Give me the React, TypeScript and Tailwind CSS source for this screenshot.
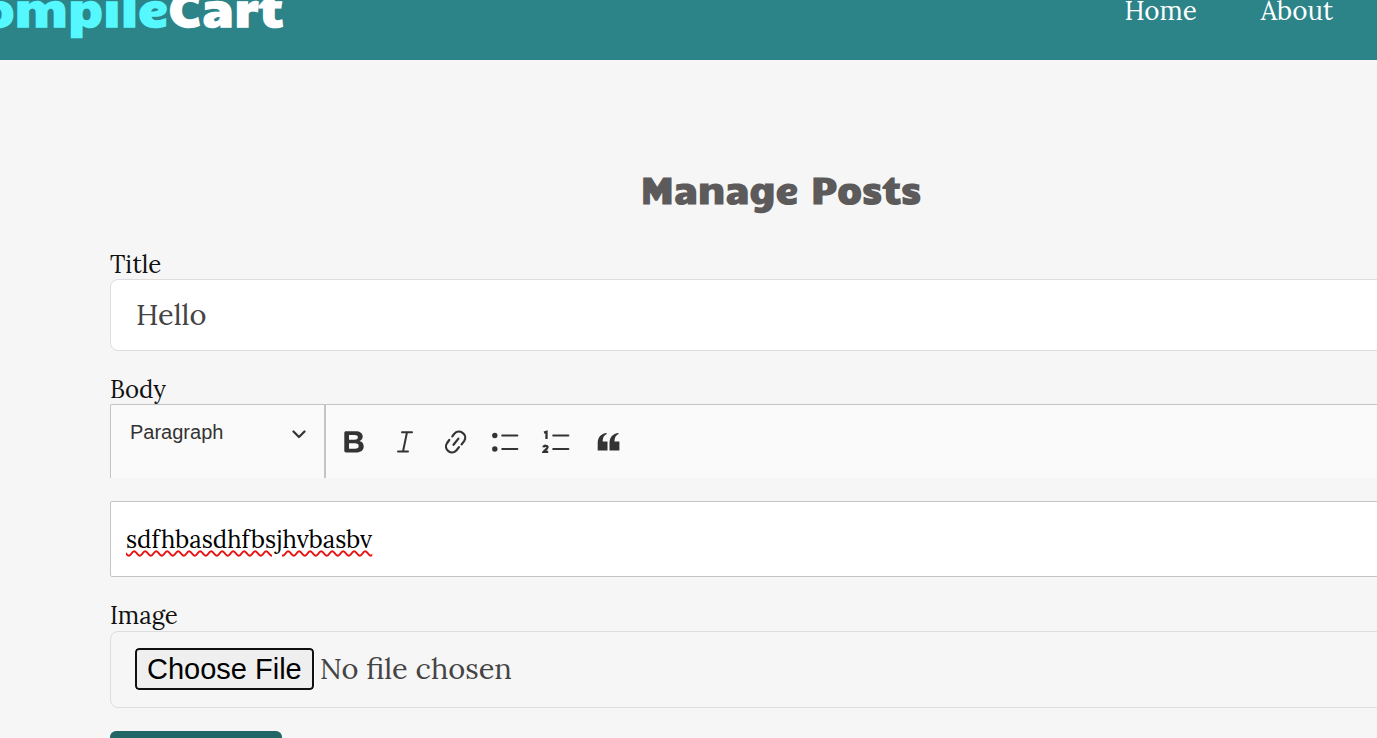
import React from "react";

const serif = "font-['Lora','Liberation_Serif',serif]";
const display = "font-['Candal','Noto_Sans',sans-serif] font-bold";

function ToolButton({ label, children }: { label: string; children: React.ReactNode }) {
  return (
    <button type="button" aria-label={label} className="flex h-10 w-[51px] items-center justify-center text-[#333333]">
      <svg viewBox="0 0 30 30" className="h-[30px] w-[30px]" fill="none" stroke="currentColor" strokeWidth="2.200" strokeLinecap="round" aria-hidden="true">
        {children}
      </svg>
    </button>
  );
}

function Header() {
  return (
    <header className="flex h-[60px] items-start justify-between overflow-hidden bg-[#2c8489] text-white">
      <a href="#home" className={`-ml-[52px] -mt-4 text-[48px] leading-[44px] ${display}`}>
        <span className="text-[#55f8ff]">Compile</span>Cart
      </a>
      <nav className={`flex gap-16 pr-11 text-[26px] leading-[22px] ${serif}`}>
        <a href="#home">Home</a>
        <a href="#about">About</a>
      </nav>
    </header>
  );
}

function Toolbar() {
  return (
    <div className="flex h-[74px] rounded-tl-[2px] border-l border-t border-[#c4c4c4] bg-[#fafafa]">
      <div className="relative w-[215px] border-r-2 border-[#c4c4c4]">
        <select aria-label="Heading" className="h-[54px] w-full appearance-none bg-transparent pl-[19px] font-['Liberation_Sans',sans-serif] text-[20px] text-[#333333]">
          <option>Paragraph</option>
          <option>Heading</option>
        </select>
        <svg viewBox="0 0 14 9" className="pointer-events-none absolute right-[18px] top-[25px] h-[9px] w-[14px]" fill="none" stroke="#333333" strokeWidth="2.2" strokeLinecap="round" strokeLinejoin="round" aria-hidden="true">
          <path d="M1.5 1.5 7 7l5.500-5.500" />
        </svg>
      </div>
      <div className="flex items-center pl-[1px]">
        <ToolButton label="Bold">
          <path fill="currentColor" stroke="none" fillRule="evenodd" d="M8 4.200h9.200c5 0 7.500 2 7.500 5.400 0 2.200-1.200 3.800-3.200 4.500 2.600.6 4.200 2.600 4.200 5.300 0 3.700-2.900 6-7.700 6H8c-1 0-1.700-.7-1.700-1.700V5.900c0-1 .7-1.700 1.700-1.700zM11 7.900v4.800h5.400c2.300 0 3.500-.8 3.500-2.500 0-1.600-1.100-2.300-3.400-2.300zM11 16.300v5.400h6c2.500 0 3.700-.9 3.700-2.700s-1.300-2.700-3.900-2.700z" />
        </ToolButton>
        <ToolButton label="Italic">
          <path d="M13 5.200h10M9 24.500h10M18 5.200l-4 19.300" strokeWidth="2" />
        </ToolButton>
        <ToolButton label="Link">
          <path d="m13.500 17.800 4.900-6.200M12.300 9.400l1.900-2.500c4.800-5.900 14.300.8 9.900 7.200l-2.500 3.300M9.300 13l-2.200 3c-4.300 6.300 4.600 12.900 9.400 7.300l2.500-3.200" />
        </ToolButton>
        <ToolButton label="Bulleted List">
          <circle cx="3.800" cy="8.500" r="2.700" fill="currentColor" stroke="none" />
          <circle cx="3.800" cy="22" r="2.700" fill="currentColor" stroke="none" />
          <path d="M11.300 8.500h15M11.300 22h15" />
        </ToolButton>
        <ToolButton label="Numbered List">
          <path d="M11.300 8.500h15M11.300 22h15" />
          <path d="M2 5.700 4.500 4.900v7M1.500 20.300c.3-2.100 4.300-2 4 .1-.2 1.500-2.500 2.800-3.900 4.500h4.600" strokeWidth="2.300" strokeLinecap="butt" />
        </ToolButton>
        <ToolButton label="Block quote">
          <path d="M4.700 23.500v-7.300c0-6 3.300-9.600 9-10.200v1.100c-2.800 1.200-4 3.700-4.100 7.500h4.900v8.900zM16.500 23.500v-7.300c0-6 3.300-9.600 9-10.200v1.100c-2.800 1.200-4 3.700-4.100 7.500h5v8.900z" fill="currentColor" stroke="none" />
        </ToolButton>
      </div>
    </div>
  );
}

export default function App() {
  return (
    <div className={`h-screen overflow-hidden bg-[#f6f6f6] text-[#111111] ${serif}`}>
      <Header />
      <main className="-mr-[75px] pl-[110px] pt-[103px]">
        <h1 className={`text-center text-[36px] leading-[52px] text-[#5c5a5a] ${display}`}>Manage Posts</h1>
        <form className="mt-[35px] flex flex-col gap-6" onSubmit={(e) => e.preventDefault()}>
          <div>
            <label htmlFor="title" className="block text-[24px] leading-[29px]">Title</label>
            <input id="title" type="text" defaultValue="Hello" className="block h-[72px] w-full rounded-[8px] border border-[#dddddd] bg-white px-[25px] pb-[2px] text-[29px] text-[#444444]" />
          </div>
          <div>
            <span id="body-label" className="block text-[24px] leading-[29px]">Body</span>
            <Toolbar />
            <div role="textbox" contentEditable suppressContentEditableWarning spellCheck={false} aria-labelledby="body-label" className="mt-[23px] h-[76px] rounded-l-[2px] border border-[#c4c4c4] bg-white px-[15px] text-[24px] leading-[76px] text-black">
              <span className="underline decoration-[#e81010] decoration-wavy decoration-[1.5px] underline-offset-[2px] [text-decoration-line:spelling-error]">sdfhbasdhfbsjhvbasbv</span>
            </div>
          </div>
          <div>
            <label htmlFor="image" className="block text-[24px] leading-[30px]">Image</label>
            <div className="h-[77px] rounded-[8px] border border-[#dddddd] px-6 pt-4">
              <input id="image" type="file" className="block w-full text-[29px] leading-[42px] text-[#444444] file:mr-[6px] file:h-[42px] file:rounded-[4px] file:border-2 file:border-solid file:border-[#101010] file:bg-[#efefef] file:px-[10px] file:py-0 file:align-top file:font-['Liberation_Sans',sans-serif] file:text-[29px] file:leading-[38px] file:text-black file:outline-1 file:outline-white" />
            </div>
          </div>
          <button type="submit" aria-label="Update Post" className="-mt-px h-[60px] w-[172px] shrink-0 rounded-[6px] bg-[#206666]" />
        </form>
      </main>
    </div>
  );
}
